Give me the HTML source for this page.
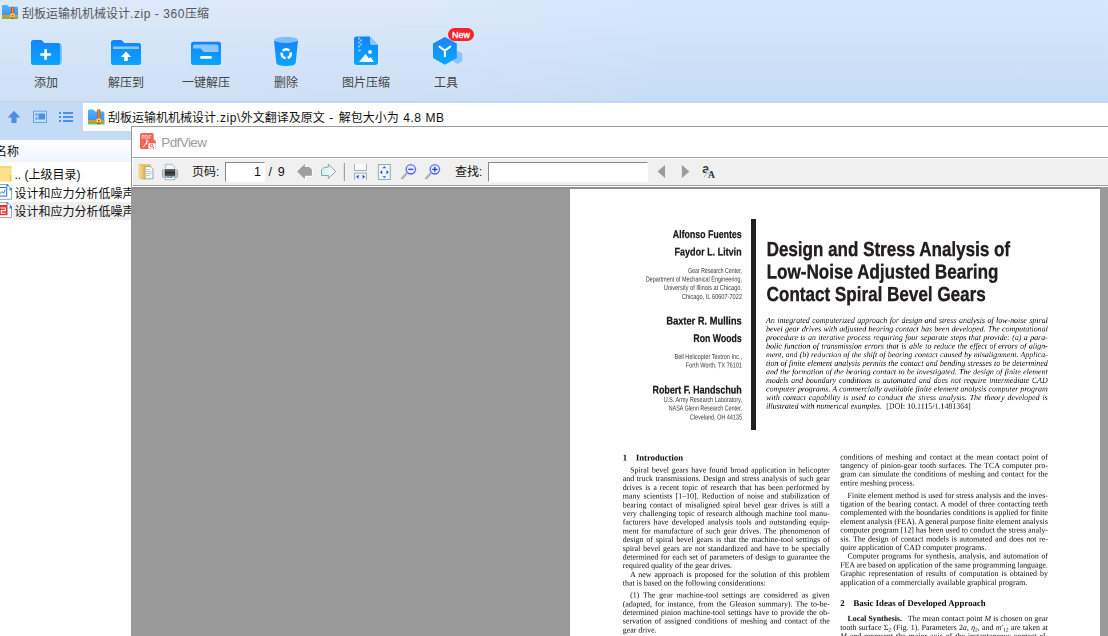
<!DOCTYPE html><html lang="zh"><head><meta charset="utf-8"><title>360压缩</title><style>
*{margin:0;padding:0;box-sizing:border-box}
html,body{width:1108px;height:636px;overflow:hidden;background:#fff}
body{position:relative;font-family:"Liberation Sans","Noto Sans CJK SC",sans-serif;font-size:12px;color:#222}
.abs{position:absolute}
#titlebar{left:0;top:0;width:1108px;height:25px;background:linear-gradient(90deg,rgba(240,238,240,0.26) 0,rgba(240,238,240,0.26) 40%,rgba(240,238,240,0) 60%),linear-gradient(#d3e7fd,#d1e5fb)}
#ttext{left:22px;top:5.5px;height:17px;line-height:17px;color:#555;font-size:12px;white-space:nowrap}
#toolbar{left:0;top:25px;width:1108px;height:77px;background:linear-gradient(90deg,rgba(240,238,240,0.22) 0,rgba(240,238,240,0.18) 40%,rgba(240,238,240,0) 60%),linear-gradient(#d1e5fb,#c6dcf6);border-bottom:1px solid #bdd5f1}
.tlabel{position:absolute;top:74.5px;height:16px;line-height:16px;font-size:12px;color:#444;text-align:center;white-space:nowrap;width:80px}
#addrrow{left:0;top:102px;width:1108px;height:38px;background:#c4dbf5}
#addrbox{left:83px;top:103px;width:1025px;height:28px;background:#fff}
#addrtext{left:108px;top:110px;height:17px;line-height:17px;font-size:12px;color:#111;white-space:nowrap}
#leftpane{left:0;top:140px;width:131px;height:496px;background:#fff;overflow:hidden}
#lphead{left:0;top:0;width:131px;height:22px;background:linear-gradient(#ffffff,#eff5fd)}
.row{position:absolute;top:0;margin-top:1px;left:14.5px;height:18px;line-height:18px;font-size:12px;color:#111;white-space:nowrap;width:200px}
#pdfwin{left:131px;top:126px;width:977px;height:510px;background:#fff;border-left:1px solid #9a9a9a;border-top:1px solid #9a9a9a;overflow:hidden}
#pdftb{left:132px;top:157px;width:976px;height:30px;background:#f0f0f0;border-top:1px solid #a0a0a0;border-left:1px solid #fff;border-bottom:1px solid #fff;box-shadow:inset 0 -1px 0 #a0a0a0,inset 0 1px 0 #fff}
#viewer{left:132px;top:187px;width:976px;height:449px;background:linear-gradient(90deg,#8f8f8f 0,#8f8f8f 968px,#999 968px) top left/100% 2px no-repeat #999}
#page{left:570px;top:189px;width:530px;height:447px;background:#fff}
.pl{position:absolute;white-space:nowrap;font-family:"Liberation Serif",serif;color:#0c0c0c}
.lay{position:absolute;overflow:hidden;transform-origin:0 0;will-change:transform;text-rendering:geometricPrecision}
.j{text-align:justify;text-align-last:justify}
.ls{letter-spacing:0.550px}.ls2{letter-spacing:1.100px}
.inp{position:absolute;background:#fff;border-top:1px solid #8a8a8a;border-left:1px solid #8a8a8a;border-right:1px solid #fff;border-bottom:1px solid #fff}
</style></head><body>
<div id="titlebar" class="abs"></div>
<svg class="abs" style="left:2px;top:5px" width="16" height="14" viewBox="0 0 16 14">
<defs><linearGradient id="gfold" x1="0" y1="0" x2="0" y2="1"><stop offset="0" stop-color="#55b4f7"/><stop offset="1" stop-color="#2a90ee"/></linearGradient></defs>
<path d="M0 1.2Q0 0 1.2 0H5.2L7 1.8H14.8Q16 1.8 16 3V14H0Z" fill="url(#gfold)"/>
<rect x="0" y="10" width="16" height="2.2" fill="#ff8a1e"/>
<rect x="0" y="12.2" width="16" height="1.8" fill="#6cc644"/>
<rect x="9" y="2" width="3.2" height="12" fill="#b5541a"/>
<rect x="10" y="2.5" width="1.2" height="6" fill="#e9a23b"/>
<rect x="8.4" y="8.6" width="4.4" height="3.8" rx="1" fill="#ffd16b"/>
<rect x="9.8" y="10" width="1.6" height="1.4" fill="#b5541a"/>
</svg>
<div id="ttext" class="abs">刮板运输机机械设计<span class="ls">.zip</span><span class="ls"> - </span><span class="ls">360</span>压缩</div>
<div id="toolbar" class="abs"></div>
<svg class="abs" style="left:0;top:25px" width="520" height="77" viewBox="0 25 520 77">
<defs>
<linearGradient id="gb" x1="0" y1="0" x2="0" y2="1"><stop offset="0" stop-color="#1185ff"/><stop offset="1" stop-color="#0aa5ff"/></linearGradient>
<linearGradient id="gb2" x1="0" y1="0" x2="0" y2="1"><stop offset="0" stop-color="#1a84ff"/><stop offset="1" stop-color="#05a8ff"/></linearGradient>
</defs>
<!-- add -->
<path d="M31 42.5Q31 40 33.5 40H41.5L44.5 43H58Q60.5 43 60.5 45.5V62.5Q60.5 65 58 65H33.5Q31 65 31 62.5Z" fill="url(#gb)"/>
<path d="M58 43Q62 43 62 47V61Q62 65 58 65Q60.5 65 60.5 62.5V45.5Q60.5 43 58 43Z" fill="#7fc0ff"/>
<rect x="40.3" y="53.2" width="10.6" height="2.6" fill="#fff"/><rect x="44.3" y="49.2" width="2.6" height="10.6" fill="#fff"/>
<!-- extract to -->
<path d="M111 42.5Q111 40 113.5 40H121.5L124.5 43H138.5Q141 43 141 45.5V62.5Q141 65 138.5 65H113.5Q111 65 111 62.5Z" fill="url(#gb)"/>
<path d="M113 46.5H139V49H113Z" fill="#8cc8ff"/>
<path d="M126 51.5L131.2 57H127.8V61H124.2V57H120.8Z" fill="#fff"/>
<!-- one-key -->
<rect x="191" y="41.7" width="30" height="23.3" rx="2.5" fill="url(#gb)"/>
<path d="M193 46.5Q193 44.5 195 44.5H216.5Q218.5 44.5 218.5 46.5V52H204L200.5 48.5H193Z" fill="#8cc8ff"/>
<rect x="200" y="56" width="12" height="2.8" rx="1.4" fill="#fff"/>
<!-- delete -->
<path d="M274 40.500L276.300 62.800Q276.600 66 286 66Q295.400 66 295.700 62.800L298 40.500Z" fill="url(#gb)"/>
<ellipse cx="286" cy="39.900" rx="12" ry="3.100" fill="#7fbeff"/>
<circle cx="286.200" cy="53.700" r="4.500" fill="none" stroke="#fff" stroke-width="2.600" stroke-dasharray="7.400 2.025" stroke-dashoffset="2" opacity="0.950"/>
<!-- image compress -->
<path d="M354 39Q354 36.6 356.4 36.6H370L378 45V62.6Q378 65 375.6 65H356.4Q354 65 354 62.6Z" fill="url(#gb)"/>
<path d="M370 36.6L378 45H372Q370 45 370 43Z" fill="#8cc8ff"/>
<g fill="#7fc0ff"><rect x="358" y="37.5" width="2" height="2"/><rect x="360" y="39.5" width="2" height="2"/><rect x="358" y="41.5" width="2" height="2"/><rect x="360" y="43.5" width="2" height="2"/><rect x="358" y="45.5" width="2" height="2"/><circle cx="359.5" cy="50.5" r="1.3"/></g>
<circle cx="370" cy="52" r="2" fill="#d8ecff"/>
<path d="M359 62L365.5 54L369 58.5L370.5 57L374 62Z" fill="#fff"/>
<!-- tools -->
<path d="M457.500 50.800L462.300 53.600V61.200L457.500 64L452.700 61.200Z" fill="#86c3ff"/>
<path d="M444.900 37L456.800 43.400V57.900L444.900 64.700L433 57.900V43.400Z" fill="url(#gb2)"/>
<path d="M439.500 46.600L444.900 50.600L450.300 46.600M444.900 50.600V56.200" fill="none" stroke="#fff" stroke-width="2" stroke-linecap="round" stroke-linejoin="round"/>
<rect x="448" y="28" width="26" height="13" rx="6.500" fill="#f3242d"/>
<text x="461" y="37.800" font-family="Liberation Sans,sans-serif" font-size="9" fill="#fff" stroke="#fff" stroke-width="0.350" text-anchor="middle">New</text>
</svg>
<div class="tlabel" style="left:6px">添加</div>
<div class="tlabel" style="left:86px">解压到</div>
<div class="tlabel" style="left:166px">一键解压</div>
<div class="tlabel" style="left:246px">删除</div>
<div class="tlabel" style="left:326px">图片压缩</div>
<div class="tlabel" style="left:406px">工具</div>
<div id="addrrow" class="abs"></div>
<div id="addrbox" class="abs"></div>
<svg class="abs" style="left:0;top:102px" width="110" height="30" viewBox="0 102 110 30">
<path d="M14 110.700L20.4 117.400H16.600V123H11.400V117.400H7.600Z" fill="#4a8fe8"/>
<rect x="33.500" y="111.200" width="13" height="11.300" fill="none" stroke="#6aa2ea" stroke-width="1"/>
<rect x="35.500" y="113.500" width="2" height="2" fill="#4a8fe8"/><rect x="35.500" y="117.500" width="2" height="2" fill="#4a8fe8"/>
<rect x="38.500" y="113.500" width="6.500" height="6" fill="#4a8fe8"/>
<g fill="#4a8fe8"><rect x="59" y="112" width="2" height="2"/><rect x="59" y="116" width="2" height="2"/><rect x="59" y="120" width="2" height="2"/>
<rect x="63" y="112" width="10" height="2"/><rect x="63" y="116" width="10" height="2"/><rect x="63" y="120" width="10" height="2"/></g>
<g transform="translate(88 109.500) scale(1.02 1.05)">
<path d="M0 1.2Q0 0 1.2 0H5.200L7 1.800H14.800Q16 1.800 16 3V14H0Z" fill="url(#gfold)"/>
<rect x="0" y="10" width="16" height="2.200" fill="#ff8a1e"/>
<rect x="0" y="12.200" width="16" height="1.800" fill="#6cc644"/>
<rect x="9" y="0" width="3.200" height="14" fill="#b5541a"/>
<rect x="10" y="0.500" width="1.200" height="8" fill="#e9a23b"/>
<rect x="8.400" y="8.600" width="4.400" height="3.800" rx="1" fill="#ffd16b"/>
<rect x="9.800" y="10" width="1.600" height="1.400" fill="#b5541a"/>
</g>
</svg>
<div id="addrtext" class="abs">刮板运输机机械设计<span class="ls">.zip\</span>外文翻译及原文<span class="ls2"> - </span>解包大小为<span class="ls2"> </span><span class="ls">4.8 MB</span></div>
<div id="leftpane" class="abs"><div id="lphead" class="abs"></div>
<div class="abs" style="left:-5px;top:3px;height:18px;line-height:18px;font-size:12px;color:#111;white-space:nowrap">名称</div>
<div class="abs" style="left:13px;top:62px;width:118px;height:18px;background:#efefef"></div>
<svg class="abs" style="left:0;top:24px" width="14" height="60" viewBox="0 164 14 60">
<path d="M0 166H10.300Q11.500 166 11.500 167.200V181.500H0Z" fill="#fde08c"/>
<path d="M0 166H10.300Q11.500 166 11.500 167.200V168H0Z" fill="#fbd670"/>
<path d="M9.600 175H11.500V181.500H9.600Z" fill="#f3c95a"/>
<path d="M-1 184.500H7.500L11.600 188.600V199.300H-1Z" fill="#fff" stroke="#8e99a6" stroke-width="0.900"/>
<path d="M6.300 184.300H8.300V186.500H6.300ZM9.600 188H12V190.400H9.600Z" fill="#2f86e8"/>
<rect x="-1" y="187.500" width="7.700" height="8.600" fill="#fff" stroke="#2f7de1" stroke-width="1.100"/>
<path d="M0 193.800L2 191.500L3.600 193.300L5.300 189.800" fill="none" stroke="#2f7de1" stroke-width="1"/>
<path d="M-1 202.600H7.500L11.600 206.700V217.600H-1Z" fill="#fff" stroke="#8e99a6" stroke-width="0.900"/>
<path d="M6.300 202.400H8.300V204.600H6.300ZM9.600 206.100H12V208.500H9.600Z" fill="#2f86e8"/>
<rect x="-1" y="205" width="8.500" height="10.200" fill="#e8302a"/>
<path d="M0.500 208H5.300V210.600H1.300V213.200H5.600" fill="none" stroke="#fff" stroke-width="1.100"/>
</svg>
<div class="row" style="top:24.5px">.. (上级目录)</div>
<div class="row" style="top:44px">设计和应力分析低噪声调整轴承</div>
<div class="row" style="top:62px">设计和应力分析低噪声调整轴承</div>
</div>
<div id="pdfwin" class="abs"></div>
<svg class="abs" style="left:140px;top:133px" width="17" height="17" viewBox="0 0 17 17">
<path d="M0 1.500Q0 0 1.500 0H12Q13.700 0 13.700 1.500V7.300L16 8.800V14.500Q16 16 14.500 16H1.500Q0 16 0 14.500Z" fill="#f0645c"/>
<path d="M13.700 6V7.300L16 8.800Z" fill="#c94a44"/>
<text x="1.800" y="5.900" font-family="Liberation Sans,sans-serif" font-size="5.300" font-weight="bold" fill="#fbd3d0" textLength="9.500" lengthAdjust="spacingAndGlyphs">PDF</text>
<path d="M3.200 14.300L8.200 7.300M6.700 6.800V11.300" stroke="#fff" stroke-width="0.900" fill="none"/>
<rect x="8.300" y="10.300" width="7.400" height="5.400" fill="#fff"/>
<circle cx="11.600" cy="12.600" r="1.300" fill="none" stroke="#e0453e" stroke-width="0.800"/>
<path d="M12.600 13.600L14 15" stroke="#e0453e" stroke-width="0.900"/>
</svg>
<div class="abs" style="left:161.300px;top:133.500px;height:18px;line-height:18px;font-size:13.500px;letter-spacing:-0.600px;color:#9c9c9c;white-space:nowrap">PdfView</div>
<div id="pdftb" class="abs"></div>
<div id="viewer" class="abs"></div>
<svg class="abs" style="left:132px;top:158px" width="600" height="28" viewBox="132 158 600 28">
<!-- open -->
<defs><linearGradient id="gfl" x1="0" y1="0" x2="1" y2="0"><stop offset="0" stop-color="#f8e09a"/><stop offset="1" stop-color="#dfae4a"/></linearGradient>
<linearGradient id="gpr" x1="0" y1="0" x2="0" y2="1"><stop offset="0" stop-color="#6e6e73"/><stop offset="0.500" stop-color="#2e2e33"/><stop offset="1" stop-color="#5a5a62"/></linearGradient></defs>
<path d="M139 164H151V178.300H139Z" fill="#ecc76c"/>
<path d="M145 166.500H150.300L153 169.200V178.800H145Z" fill="#f3fafa" stroke="#7f9696" stroke-width="0.800"/>
<path d="M146 169.500H149.500M146 171.500H151.500M146 173.500H151.500M146 175.500H150" stroke="#a9bfc0" stroke-width="0.800"/>
<path d="M139 164L145 165.800V179.800L139 178Z" fill="url(#gfl)" stroke="#d9a944" stroke-width="0.400"/>
<!-- print -->
<path d="M165.300 164.300H172L174.700 166.900V170H165.300Z" fill="#eef6f6" stroke="#8fa6a6" stroke-width="0.700"/>
<rect x="162.400" y="169.800" width="15.300" height="7.800" rx="1" fill="#c9c9d2" stroke="#8c8c90" stroke-width="0.600"/>
<rect x="164.800" y="169" width="10.300" height="7.200" fill="url(#gpr)"/>
<rect x="165.300" y="176.300" width="9.500" height="3.500" fill="#fff" stroke="#7f9696" stroke-width="0.700"/>
<rect x="166.800" y="176.800" width="2.600" height="1" fill="#2a6be0"/><rect x="170" y="176.800" width="2.600" height="1" fill="#1e8a4a"/>
<rect x="175.400" y="173" width="1.300" height="1.300" fill="#4ce04c"/>
<!-- back arrow -->
<path d="M297 171.400L304.900 163.900V167H309.200L311.900 169.600V175.800H304.900V179Z" transform="translate(0.900 0.900)" fill="#fff"/>
<path d="M297 171.400L304.900 163.900V167H309.200L311.900 169.600V175.800H304.900V179Z" fill="#9e9e9e"/>
<!-- fwd arrow -->
<defs><linearGradient id="gfw" x1="0" y1="0" x2="1" y2="0"><stop offset="0" stop-color="#d6ebeb"/><stop offset="1" stop-color="#ffffff"/></linearGradient></defs>
<path d="M335.800 171.400L328.300 164.200V167.300H324.200L321.500 170V175.500H328.300V178.600Z" fill="url(#gfw)" stroke="#7c9c9c" stroke-width="0.900" stroke-linejoin="miter"/>
<!-- sep -->
<rect x="343.800" y="163" width="1.200" height="18" fill="#a0a0a0"/>
<!-- fit width -->
<path d="M354.500 164V170.500H366.500V164" fill="#f7f9fb" stroke="#9aa8b4" stroke-width="0.900"/>
<path d="M354.500 180V173H366.500V180" fill="#e8f0f5" stroke="#9aa8b4" stroke-width="0.900"/>
<path d="M356.200 176.700L358.500 174.700V178.700ZM365 176.700L362.700 174.700V178.700Z" fill="#1c3fd6"/>
<!-- fit page -->
<rect x="378.300" y="164.500" width="12" height="15" fill="#eef5f5" stroke="#8fa4a4" stroke-width="0.900"/>
<path d="M384.300 166L386.300 168.200H382.300ZM384.300 178.300L386.300 176.300H382.300Z" fill="#3d6ae0"/>
<path d="M380 172.300L382.200 170.300V174.300ZM388.700 172.300L386.500 170.300V174.300Z" fill="#1c3fd6"/>
<!-- zoom out -->
<path d="M402.200 178.200L407 172.900" stroke="#a2a2a2" stroke-width="2.300" stroke-linecap="round"/>
<path d="M402.400 177.800L406.800 173" stroke="#d6d6d6" stroke-width="0.700" stroke-linecap="round"/>
<circle cx="410.800" cy="169.300" r="5.500" fill="none" stroke="#cfd6ff" stroke-width="0.900"/>
<circle cx="410.800" cy="169.300" r="4.600" fill="#e8ecff" stroke="#4358de" stroke-width="1.100"/>
<path d="M408.300 169.300H413.300" stroke="#1c2fd0" stroke-width="1.200"/>
<!-- zoom in -->
<path d="M426.200 178.200L431 172.900" stroke="#a2a2a2" stroke-width="2.300" stroke-linecap="round"/>
<path d="M426.400 177.800L430.800 173" stroke="#d6d6d6" stroke-width="0.700" stroke-linecap="round"/>
<circle cx="434.800" cy="169.300" r="5.500" fill="none" stroke="#cfd6ff" stroke-width="0.900"/>
<circle cx="434.800" cy="169.300" r="4.600" fill="#e8ecff" stroke="#4358de" stroke-width="1.100"/>
<path d="M432.300 169.300H437.300M434.800 166.800V171.800" stroke="#1c2fd0" stroke-width="1.200"/>
<!-- find arrows -->
<path d="M657.500 171.500L665 165V178Z" fill="#9b9b9b"/>
<path d="M689.400 171.500L681.900 165V178Z" fill="#9b9b9b"/>
<!-- aA -->
<text x="702.300" y="173" font-family="Liberation Sans,sans-serif" font-size="12.500" font-weight="bold" fill="#3a3a3a">a</text>
<path d="M704 177L707.200 173.200" stroke="#b4c0cc" stroke-width="1.100" stroke-linecap="round"/>
<circle cx="708.300" cy="172" r="1.900" fill="#cfe2f7" stroke="#a9bdd4" stroke-width="0.600"/>
<text x="708" y="177.800" font-family="Liberation Serif,serif" font-size="9.600" font-weight="bold" fill="#2e2e2e">A</text>
</svg>
<div class="abs" style="left:192px;top:163px;height:18px;line-height:18px;font-size:12px;color:#111;white-space:nowrap">页码:</div>
<div class="inp" style="left:225px;top:161.500px;width:40px;height:20px"></div>
<div class="abs" style="left:225px;top:163px;width:36px;height:18px;line-height:18px;font-size:12.500px;color:#111;text-align:right">1</div>
<div class="abs" style="left:268.500px;top:163px;height:18px;line-height:18px;font-size:12.500px;letter-spacing:1.100px;color:#111;white-space:nowrap">/ 9</div>
<div class="abs" style="left:455px;top:163px;height:18px;line-height:18px;font-size:12px;color:#111;white-space:nowrap">查找:</div>
<div class="inp" style="left:488px;top:161.500px;width:160px;height:20px"></div>
<div id="page" class="abs"></div>
<div class="abs" style="left:751.100px;top:219.400px;width:5.300px;height:210.300px;background:#231f20"></div>
<div class="lay" style="left:640px;top:224px;width:212.0px;height:408.0px;transform:scale(0.500000)">
<svg class="abs" style="left:0;top:0" width="212.0" height="408.0" viewBox="640 224 106 204" font-family="Liberation Sans,sans-serif"><text x="672.80" y="238.10" font-size="11.00" font-weight="bold" fill="#1c1c1c" stroke="#1c1c1c" stroke-width="0.25" textLength="68.90" lengthAdjust="spacingAndGlyphs">Alfonso Fuentes</text><text x="674.50" y="255.40" font-size="11.00" font-weight="bold" fill="#1c1c1c" stroke="#1c1c1c" stroke-width="0.25" textLength="67.20" lengthAdjust="spacingAndGlyphs">Faydor L. Litvin</text><text x="666.40" y="324.40" font-size="11.00" font-weight="bold" fill="#1c1c1c" stroke="#1c1c1c" stroke-width="0.25" textLength="75.30" lengthAdjust="spacingAndGlyphs">Baxter R. Mullins</text><text x="693.40" y="341.80" font-size="11.00" font-weight="bold" fill="#1c1c1c" stroke="#1c1c1c" stroke-width="0.25" textLength="48.30" lengthAdjust="spacingAndGlyphs">Ron Woods</text><text x="652.50" y="393.50" font-size="11.00" font-weight="bold" fill="#1c1c1c" stroke="#1c1c1c" stroke-width="0.25" textLength="89.20" lengthAdjust="spacingAndGlyphs">Robert F. Handschuh</text><text x="688.00" y="272.90" font-size="7.20" font-weight="normal" fill="#3a3a3a" textLength="54.00" lengthAdjust="spacingAndGlyphs">Gear Research Center,</text><text x="645.70" y="281.50" font-size="7.20" font-weight="normal" fill="#3a3a3a" textLength="96.30" lengthAdjust="spacingAndGlyphs">Department of Mechanical Engineering,</text><text x="663.80" y="290.20" font-size="7.20" font-weight="normal" fill="#3a3a3a" textLength="78.20" lengthAdjust="spacingAndGlyphs">University of Illinois at Chicago,</text><text x="681.90" y="298.80" font-size="7.20" font-weight="normal" fill="#3a3a3a" textLength="60.10" lengthAdjust="spacingAndGlyphs">Chicago, IL 60607-7022</text><text x="674.50" y="359.20" font-size="7.20" font-weight="normal" fill="#3a3a3a" textLength="67.50" lengthAdjust="spacingAndGlyphs">Bell Helicopter Textron Inc.,</text><text x="685.80" y="367.60" font-size="7.20" font-weight="normal" fill="#3a3a3a" textLength="56.20" lengthAdjust="spacingAndGlyphs">Forth Worth, TX 76101</text><text x="663.70" y="402.00" font-size="7.20" font-weight="normal" fill="#3a3a3a" textLength="78.30" lengthAdjust="spacingAndGlyphs">U.S. Army Research Laboratory,</text><text x="668.80" y="410.70" font-size="7.20" font-weight="normal" fill="#3a3a3a" textLength="73.20" lengthAdjust="spacingAndGlyphs">NASA Glenn Research Center,</text><text x="689.90" y="419.40" font-size="7.20" font-weight="normal" fill="#3a3a3a" textLength="52.10" lengthAdjust="spacingAndGlyphs">Cleveland, OH 44135</text></svg>
</div>
<div class="lay" style="left:764px;top:234px;width:500.0px;height:152.0px;transform:scale(0.500000)">
<svg class="abs" style="left:0;top:0" width="500.0" height="152.0" viewBox="764 234 250 76" font-family="Liberation Sans,sans-serif"><text x="766.60" y="256.10" font-size="20.30" font-weight="bold" fill="#231f20" stroke="#231f20" stroke-width="0.40" textLength="243.50" lengthAdjust="spacingAndGlyphs">Design and Stress Analysis of</text><text x="766.60" y="278.50" font-size="20.30" font-weight="bold" fill="#231f20" stroke="#231f20" stroke-width="0.40" textLength="231.90" lengthAdjust="spacingAndGlyphs">Low-Noise Adjusted Bearing</text><text x="766.60" y="300.80" font-size="20.30" font-weight="bold" fill="#231f20" stroke="#231f20" stroke-width="0.40" textLength="219.20" lengthAdjust="spacingAndGlyphs">Contact Spiral Bevel Gears</text></svg>
</div>
<div class="lay" style="left:764px;top:312px;width:500.5px;height:178.5px;transform:scale(0.571429)">
<div class="pl" style="left:3.50px;top:4px;height:21.0px;line-height:21.0px;font-size:13.83px;word-spacing:0.877px;font-style:italic">An integrated computerized approach for design and stress analysis of low-noise spiral</div>
<div class="pl" style="left:3.50px;top:19px;height:21.0px;line-height:21.0px;font-size:13.83px;word-spacing:0.618px;font-style:italic">bevel gear drives with adjusted bearing contact has been developed. The computational</div>
<div class="pl" style="left:3.50px;top:34px;height:21.0px;line-height:21.0px;font-size:13.83px;word-spacing:0.745px;font-style:italic">procedure is an iterative process requiring four separate steps that provide: (a) a para-</div>
<div class="pl" style="left:3.50px;top:49px;height:21.0px;line-height:21.0px;font-size:13.83px;word-spacing:0.985px;font-style:italic">bolic function of transmission errors that is able to reduce the effect of errors of align-</div>
<div class="pl" style="left:3.50px;top:64px;height:21.0px;line-height:21.0px;font-size:13.83px;word-spacing:0.430px;font-style:italic">ment, and (b) reduction of the shift of bearing contact caused by misalignment. Applica-</div>
<div class="pl" style="left:3.50px;top:79px;height:21.0px;line-height:21.0px;font-size:13.83px;word-spacing:0.471px;font-style:italic">tion of finite element analysis permits the contact and bending stresses to be determined</div>
<div class="pl" style="left:3.50px;top:94px;height:21.0px;line-height:21.0px;font-size:13.83px;word-spacing:0.565px;font-style:italic">and the formation of the bearing contact to be investigated. The design of finite element</div>
<div class="pl" style="left:3.50px;top:109px;height:21.0px;line-height:21.0px;font-size:13.83px;word-spacing:1.438px;font-style:italic">models and boundary conditions is automated and does not require intermediate CAD</div>
<div class="pl" style="left:3.50px;top:124px;height:21.0px;line-height:21.0px;font-size:13.83px;word-spacing:0.208px;font-style:italic">computer programs. A commercially available finite element analysis computer program</div>
<div class="pl" style="left:3.50px;top:139px;height:21.0px;line-height:21.0px;font-size:13.83px;word-spacing:1.622px;font-style:italic">with contact capability is used to conduct the stress analysis. The theory developed is</div>
<div class="pl" style="left:3.50px;top:154px;height:21.0px;line-height:21.0px;font-size:13.83px;word-spacing:0.277px;font-style:italic">illustrated with numerical examples.&nbsp; <span style="font-style:normal">[DOI: 10.1115/1.1481364]</span></div>
</div>
<div class="lay" style="left:620px;top:450px;width:424.0px;height:372.0px;transform:scale(0.500000)">
<div class="pl" style="left:5.60px;top:3px;height:24.0px;line-height:24.0px;font-size:17.40px;word-spacing:0.000px;"><b>1&nbsp;&nbsp;&nbsp;&nbsp;Introduction</b></div>
<div class="pl" style="left:20.20px;top:29px;height:24.0px;line-height:24.0px;font-size:15.80px;word-spacing:1.758px;">Spiral bevel gears have found broad application in helicopter</div>
<div class="pl" style="left:5.60px;top:46px;height:24.0px;line-height:24.0px;font-size:15.80px;word-spacing:1.130px;">and truck transmissions. Design and stress analysis of such gear</div>
<div class="pl" style="left:5.60px;top:64px;height:24.0px;line-height:24.0px;font-size:15.80px;word-spacing:2.010px;">drives is a recent topic of research that has been performed by</div>
<div class="pl" style="left:5.60px;top:81px;height:24.0px;line-height:24.0px;font-size:15.80px;word-spacing:2.312px;">many scientists [1–10]. Reduction of noise and stabilization of</div>
<div class="pl" style="left:5.60px;top:99px;height:24.0px;line-height:24.0px;font-size:15.80px;word-spacing:2.250px;">bearing contact of misaligned spiral bevel gear drives is still a</div>
<div class="pl" style="left:5.60px;top:116px;height:24.0px;line-height:24.0px;font-size:15.80px;word-spacing:1.170px;">very challenging topic of research although machine tool manu-</div>
<div class="pl" style="left:5.60px;top:133px;height:24.0px;line-height:24.0px;font-size:15.80px;word-spacing:2.522px;">facturers have developed analysis tools and outstanding equip-</div>
<div class="pl" style="left:5.60px;top:151px;height:24.0px;line-height:24.0px;font-size:15.80px;word-spacing:2.048px;">ment for manufacture of such gear drives. The phenomenon of</div>
<div class="pl" style="left:5.60px;top:168px;height:24.0px;line-height:24.0px;font-size:15.80px;word-spacing:1.898px;">design of spiral bevel gears is that the machine-tool settings of</div>
<div class="pl" style="left:5.60px;top:186px;height:24.0px;line-height:24.0px;font-size:15.80px;word-spacing:1.640px;">spiral bevel gears are not standardized and have to be specially</div>
<div class="pl" style="left:5.60px;top:203px;height:24.0px;line-height:24.0px;font-size:15.80px;word-spacing:0.852px;">determined for each set of parameters of design to guarantee the</div>
<div class="pl" style="left:5.60px;top:220px;height:24.0px;line-height:24.0px;font-size:15.80px;word-spacing:0.000px;">required quality of the gear drives.</div>
<div class="pl" style="left:20.20px;top:238px;height:24.0px;line-height:24.0px;font-size:15.80px;word-spacing:1.926px;">A new approach is proposed for the solution of this problem</div>
<div class="pl" style="left:5.60px;top:255px;height:24.0px;line-height:24.0px;font-size:15.80px;word-spacing:0.000px;">that is based on the following considerations:</div>
<div class="pl" style="left:20.20px;top:279px;height:24.0px;line-height:24.0px;font-size:15.80px;word-spacing:3.770px;">(1) The gear machine-tool settings are considered as given</div>
<div class="pl" style="left:5.60px;top:297px;height:24.0px;line-height:24.0px;font-size:15.80px;word-spacing:2.248px;">(adapted, for instance, from the Gleason summary). The to-be-</div>
<div class="pl" style="left:5.60px;top:314px;height:24.0px;line-height:24.0px;font-size:15.80px;word-spacing:1.056px;">determined pinion machine-tool settings have to provide the ob-</div>
<div class="pl" style="left:5.60px;top:331px;height:24.0px;line-height:24.0px;font-size:15.80px;word-spacing:2.156px;">servation of assigned conditions of meshing and contact of the</div>
<div class="pl" style="left:5.60px;top:349px;height:24.0px;line-height:24.0px;font-size:15.80px;word-spacing:0.000px;">gear drive.</div>
</div>
<div class="lay" style="left:838px;top:448px;width:424.0px;height:376.0px;transform:scale(0.500000)">
<div class="pl" style="left:4.40px;top:7px;height:24.0px;line-height:24.0px;font-size:15.80px;word-spacing:1.882px;">conditions of meshing and contact at the mean contact point of</div>
<div class="pl" style="left:4.40px;top:24px;height:24.0px;line-height:24.0px;font-size:15.80px;word-spacing:1.496px;">tangency of pinion-gear tooth surfaces. The TCA computer pro-</div>
<div class="pl" style="left:4.40px;top:41px;height:24.0px;line-height:24.0px;font-size:15.80px;word-spacing:1.006px;">gram can simulate the conditions of meshing and contact for the</div>
<div class="pl" style="left:4.40px;top:59px;height:24.0px;line-height:24.0px;font-size:15.80px;word-spacing:0.000px;">entire meshing process.</div>
<div class="pl" style="left:19.00px;top:84px;height:24.0px;line-height:24.0px;font-size:15.80px;word-spacing:0.244px;">Finite element method is used for stress analysis and the inves-</div>
<div class="pl" style="left:4.40px;top:101px;height:24.0px;line-height:24.0px;font-size:15.80px;word-spacing:0.788px;">tigation of the bearing contact. A model of three contacting teeth</div>
<div class="pl" style="left:4.40px;top:118px;height:24.0px;line-height:24.0px;font-size:15.80px;word-spacing:-0.062px;">complemented with the boundaries conditions is applied for finite</div>
<div class="pl" style="left:4.40px;top:136px;height:24.0px;line-height:24.0px;font-size:15.80px;word-spacing:-0.224px;">element analysis (FEA). A general purpose finite element analysis</div>
<div class="pl" style="left:4.40px;top:153px;height:24.0px;line-height:24.0px;font-size:15.80px;word-spacing:0.042px;">computer program [12] has been used to conduct the stress analy-</div>
<div class="pl" style="left:4.40px;top:171px;height:24.0px;line-height:24.0px;font-size:15.80px;word-spacing:1.418px;">sis. The design of contact models is automated and does not re-</div>
<div class="pl" style="left:4.40px;top:188px;height:24.0px;line-height:24.0px;font-size:15.80px;word-spacing:0.000px;">quire application of CAD computer programs.</div>
<div class="pl" style="left:19.00px;top:205px;height:24.0px;line-height:24.0px;font-size:15.80px;word-spacing:1.162px;">Computer programs for synthesis, analysis, and automation of</div>
<div class="pl" style="left:4.40px;top:223px;height:24.0px;line-height:24.0px;font-size:15.80px;word-spacing:-0.248px;">FEA are based on application of the same programming language.</div>
<div class="pl" style="left:4.40px;top:240px;height:24.0px;line-height:24.0px;font-size:15.80px;word-spacing:2.024px;">Graphic representation of results of computation is obtained by</div>
<div class="pl" style="left:4.40px;top:258px;height:24.0px;line-height:24.0px;font-size:15.80px;word-spacing:0.000px;">application of a commercially available graphical program.</div>
<div class="pl" style="left:4.40px;top:298px;height:24.0px;line-height:24.0px;font-size:17.60px;word-spacing:0.000px;"><b>2&nbsp;&nbsp;&nbsp;&nbsp;Basic Ideas of Developed Approach</b></div>
<div class="pl" style="left:19.00px;top:330px;height:24.0px;line-height:24.0px;font-size:15.80px;word-spacing:0.114px;"><b>Local Synthesis.</b>&nbsp;&nbsp; The mean contact point <i>M</i> is chosen on gear</div>
<div class="pl" style="left:4.40px;top:348px;height:24.0px;line-height:24.0px;font-size:15.80px;word-spacing:0.574px;">tooth surface Σ<span style="font-size:0.7em;position:relative;top:0.28em">2</span> (Fig. 1). Parameters 2<i>a</i>, <i>η</i><span style="font-size:0.7em;position:relative;top:0.28em">2</span>, and <i>m</i>′<span style="font-size:0.7em;position:relative;top:0.28em">12</span> are taken at</div>
<div class="pl" style="left:4.40px;top:365px;height:24.0px;line-height:24.0px;font-size:15.80px;word-spacing:1.972px;"><i>M</i> and represent the major axis of the instantaneous contact el-</div>
</div>
</body></html>
